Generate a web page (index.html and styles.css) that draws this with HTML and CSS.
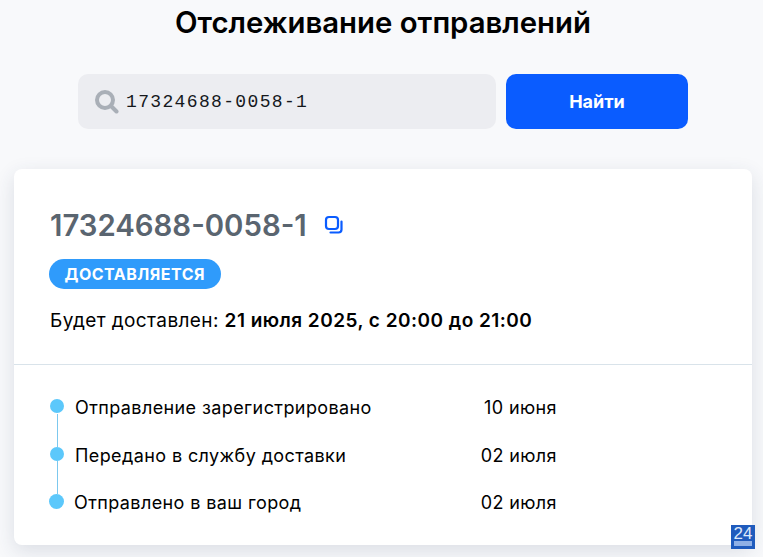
FILE: index.html
```html
<!DOCTYPE html>
<html lang="ru">
<head>
    <meta charset="UTF-8">
    <title>Отслеживание отправлений</title>
    <link rel="stylesheet" href="styles.css">
</head>
<body>
<h1>Отслеживание отправлений</h1>
<div class="search">
    <div class="search-field">
        <svg class="search-icon" width="24" height="24" viewBox="0 0 24 24">
            <circle cx="10" cy="10" r="8" fill="none" stroke="#a9afb7" stroke-width="4"/>
            <path d="M16 16l5.5 5.5" fill="none" stroke="#a9afb7" stroke-width="4" stroke-linecap="round"/>
        </svg>
        <span class="search-value">17324688-0058-1</span>
    </div>
    <button class="search-button">Найти</button>
</div>
<div class="card">
    <div class="card-top">
        <div class="track">
            <span class="track-number">17324688-0058-1</span>
            <svg class="copy-icon" width="20" height="20" viewBox="0 0 20 20">
                <rect x="2" y="2" width="12" height="12" rx="3" fill="none" stroke="#0a5cff" stroke-width="2.2"/>
                <path d="M17.5 6.5v8a3 3 0 0 1-3 3h-8" fill="none" stroke="#0a5cff" stroke-width="2.2" stroke-linecap="round"/>
            </svg>
        </div>
        <div class="badge">ДОСТАВЛЯЕТСЯ</div>
        <p class="delivery">Будет доставлен: <b>21 июля 2025, с 20:00 до 21:00</b></p>
    </div>
    <div class="timeline">
        <div class="step">
            <span class="dot"></span>
            <span class="step-name">Отправление зарегистрировано</span>
            <span class="step-date">10 июня</span>
        </div>
        <div class="step">
            <span class="dot"></span>
            <span class="step-name">Передано в службу доставки</span>
            <span class="step-date">02 июля</span>
        </div>
        <div class="step step-last">
            <span class="dot"></span>
            <span class="step-name">Отправлено в ваш город</span>
            <span class="step-date">02 июля</span>
        </div>
    </div>
</div>
<div class="widget">24<span class="widget-bar"></span></div>
</body>
</html>
```
FILE: styles.css
```css
html, body{
    margin:0px;
    padding:0px;
    height:100%;
    overflow:hidden;
}
body{
    background-color:#f8f9fb;
    font-family:Inter, "Noto Sans", sans-serif;
    color:#000;
}
h1{
    margin:0px;
    padding-top:5px;
    padding-left:3px;
    height:74px;
    box-sizing:border-box;
    text-align:center;
    font-size:29.33px;
    line-height:36px;
    font-weight:600;
}
.search{
    display:flex;
    gap:10px;
    margin-left:78px;
    width:610px;
    height:55px;
}
.search-field{
    display:flex;
    align-items:center;
    flex:1;
    padding-left:17px;
    gap:7px;
    background-color:#ecedf1;
    border-radius:10px;
}
.search-value{
    font-family:"Liberation Mono", monospace;
    font-size:18px;
    letter-spacing:1.35px;
    color:#15181c;
}
.search-button{
    width:182px;
    border:none;
    border-radius:10px;
    background-color:#0a5cff;
    color:white;
    font-family:Inter, sans-serif;
    font-size:18px;
    font-weight:700;
}
.card{
    margin:40px 11px 0px 14px;
    height:376px;
    background-color:white;
    border-radius:8px;
    box-shadow:0px 6px 20px rgba(40,60,90,0.14);
}
.card-top{
    height:196px;
    box-sizing:border-box;
    padding:36px 36px 0px 36px;
    border-bottom:1px solid #d9e3ea;
}
.track{
    display:flex;
    align-items:center;
    gap:17px;
    height:40px;
}
.track-number{
    font-size:29.33px;
    font-weight:600;
    color:#5a6570;
}
.badge{
    display:inline-block;
    margin-top:14px;
    margin-left:-1px;
    padding:0px 15.5px;
    height:30px;
    line-height:30px;
    border-radius:15px;
    background-color:#2f9bfb;
    color:white;
    font-size:16px;
    font-weight:700;
    letter-spacing:0.5px;
}
.delivery{
    margin:20px 0px 0px 0px;
    font-size:19px;
    line-height:24px;
    letter-spacing:0.4px;
}
.delivery b{
    font-weight:600;
    letter-spacing:0.47px;
}
.timeline{
    width:508px;
    margin-left:35px;
    padding-top:18.8px;
}
.step{
    position:relative;
    display:flex;
    align-items:center;
    height:47.5px;
    font-size:18px;
    letter-spacing:0.4px;
}
.dot{
    width:14px;
    height:14px;
    margin-right:11px;
    margin-left:1px;
    margin-top:-3px;
    border-radius:50%;
    background-color:#5cc8fb;
}
.step-last .dot{
    margin-left:0px;
    width:15px;
    height:15px;
    margin-right:10px;
}
.step::after{
    content:"";
    position:absolute;
    left:8px;
    top:30px;
    width:1px;
    height:33px;
    background-color:#7cc8ee;
}
.step-last::after{
    display:none;
}
.step-name{
    flex:1;
}
.widget{
    position:absolute;
    right:8px;
    bottom:8px;
    width:24px;
    height:24px;
    background-color:#1f5bbd;
    color:#dfe9fa;
    font-family:"Liberation Sans", sans-serif;
    font-size:17px;
    line-height:18px;
    text-align:center;
}
.widget-bar{
    position:absolute;
    left:3px;
    right:3px;
    bottom:3px;
    height:5px;
    background-color:#8fb0e6;
}
```
